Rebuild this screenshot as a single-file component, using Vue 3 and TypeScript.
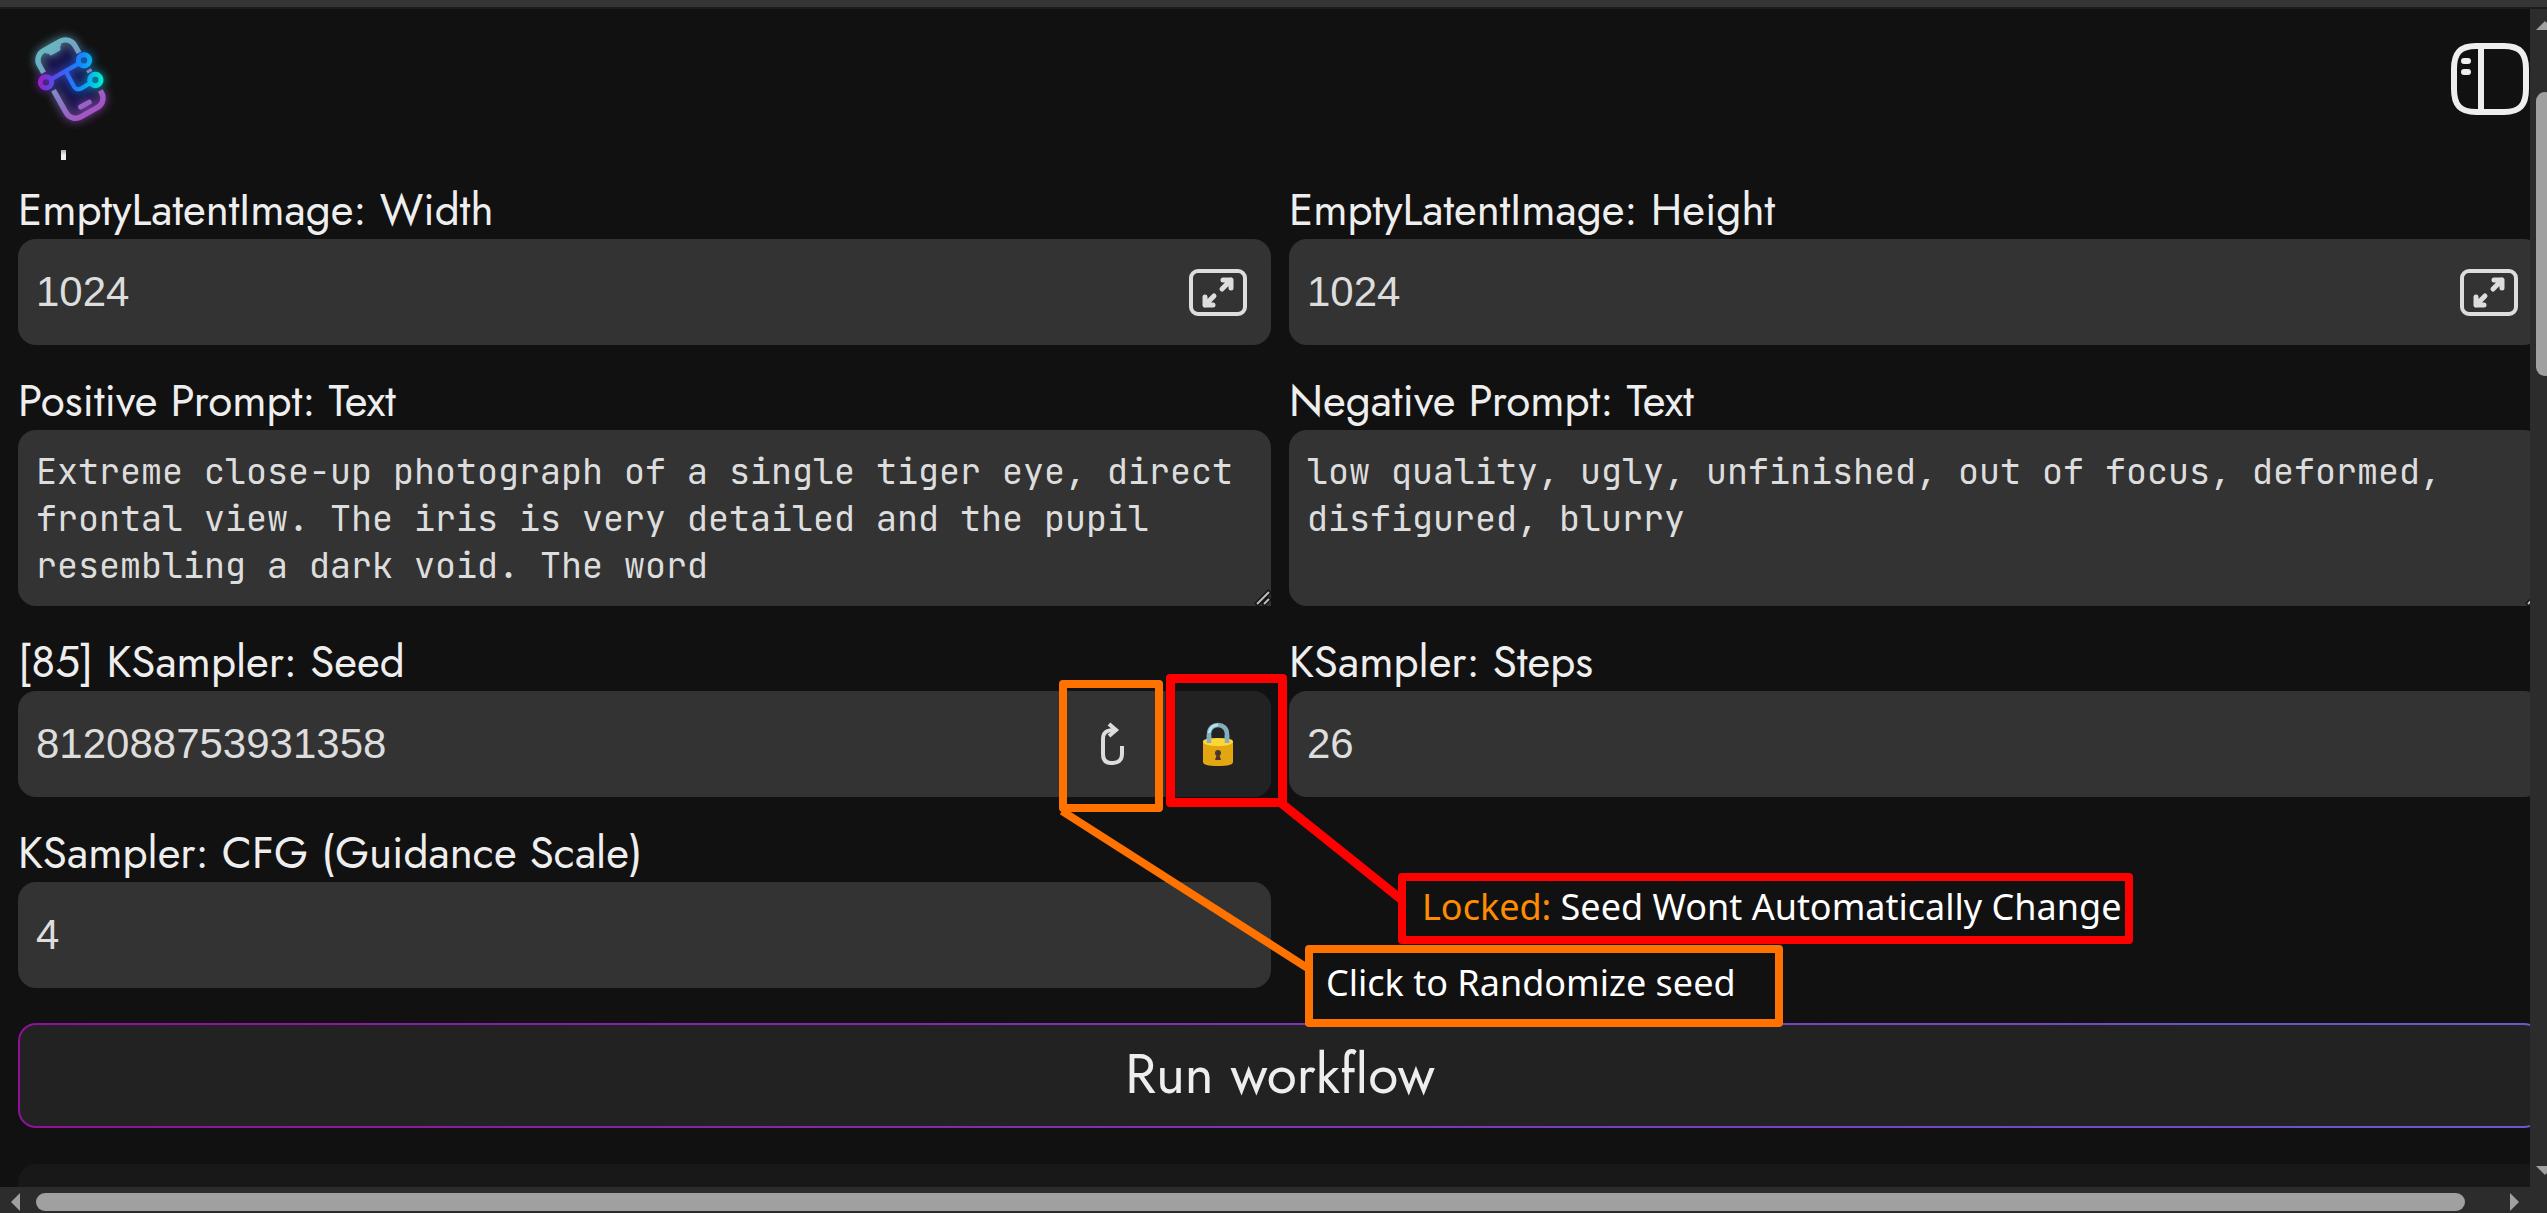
<script setup lang="ts">
import { ref } from 'vue'

interface Field {
  id: string
  label: string
  kind: 'number' | 'text' | 'seed' | 'plain'
  value: string
}

const fields = ref<Field[]>([
  { id: 'width', label: 'EmptyLatentImage: Width', kind: 'number', value: '1024' },
  { id: 'height', label: 'EmptyLatentImage: Height', kind: 'number', value: '1024' },
  {
    id: 'positive',
    label: 'Positive Prompt: Text',
    kind: 'text',
    value:
      'Extreme close-up photograph of a single tiger eye, direct frontal view. The iris is very detailed and the pupil resembling a dark void. The word',
  },
  {
    id: 'negative',
    label: 'Negative Prompt: Text',
    kind: 'text',
    value: 'low quality, ugly, unfinished, out of focus, deformed, disfigured, blurry',
  },
  { id: 'seed', label: '[85] KSampler: Seed', kind: 'seed', value: '812088753931358' },
  { id: 'steps', label: 'KSampler: Steps', kind: 'plain', value: '26' },
  { id: 'cfg', label: 'KSampler: CFG (Guidance Scale)', kind: 'plain', value: '4' },
])

const locked = ref(true)

function randomize(field: Field) {
  field.value = String(Math.floor(Math.random() * 1e15))
}
</script>

<template>
  <div class="page">
    <div class="topbar"></div>
    <div class="body">
      <div class="view">
        <header class="header">
          <svg class="logo" viewBox="24 21 315 315" aria-hidden="true">
            <defs>
              <linearGradient id="phone" gradientUnits="userSpaceOnUse" x1="-20" y1="-115" x2="20" y2="115">
                <stop offset="0" stop-color="#69b6c2" />
                <stop offset="0.5" stop-color="#7f88c6" />
                <stop offset="1" stop-color="#a552c6" />
              </linearGradient>
              <linearGradient id="nodes" gradientUnits="userSpaceOnUse" x1="90" y1="165" x2="275" y2="190">
                <stop offset="0" stop-color="#9a1fc8" />
                <stop offset="0.25" stop-color="#4f50ec" />
                <stop offset="0.62" stop-color="#1585ff" />
                <stop offset="0.8" stop-color="#08b4f4" />
                <stop offset="1" stop-color="#00ecd4" />
              </linearGradient>
              <filter id="glow" filterUnits="userSpaceOnUse" x="-400" y="-400" width="1000" height="1000">
                <feGaussianBlur stdDeviation="14" />
              </filter>
              <g id="phone-shape" transform="translate(182 178) rotate(-29.5)" fill="none" stroke="url(#phone)" stroke-width="16">
                <path d="M-61-57V-83A32 32 0 0 1-29-115H29A32 32 0 0 1 61-83V-57" />
                <path d="M-61 3V81A32 32 0 0 0-29 113H29A32 32 0 0 0 61 81V73" />
                <path d="M61 1V10" />
                <path d="M-26-110H26V-103Q19-102 19-97Q19-91 13-91H-13Q-19-91-19-97Q-19-102-26-103Z" fill="url(#phone)" stroke="none" />
                <path d="M-15 87H15" stroke-width="15" stroke-linecap="round" />
              </g>
              <g id="node-shape" fill="none" stroke="url(#nodes)" stroke-width="15">
                <circle cx="108" cy="187" r="17" />
                <circle cx="222" cy="121" r="17" />
                <circle cx="256" cy="180" r="17" />
                <path d="M123 178L207 130M167 154L190 196Q198 213 214 205L241 189" stroke-width="13" />
              </g>
            </defs>
            <rect x="-55" y="-108" width="110" height="216" rx="28" transform="translate(182 178) rotate(-29.5)" fill="#1c1464" opacity="0.7" filter="url(#glow)" />
            <use href="#phone-shape" filter="url(#glow)" opacity="0.9" />
            <use href="#node-shape" filter="url(#glow)" opacity="0.9" />
            <use href="#phone-shape" />
            <use href="#node-shape" />
          </svg>
          <button class="icon-button" type="button" aria-label="Toggle sidebar">
            <svg width="80" height="73" viewBox="0 0 80 73" fill="none" stroke="#eee" stroke-width="6">
              <path d="M26 3H54C70 3 76 10 76 26V46C76 62 70 69 54 69H26C10 69 4 62 4 46V26C4 10 10 3 26 3Z" />
              <path d="M31 3V69" />
              <path d="M14 18H18M14 29H18" stroke-linecap="round" />
            </svg>
          </button>
        </header>

        <main class="content">
          <span class="title-tail"></span>
          <form class="grid" @submit.prevent>
            <div v-for="field in fields" :key="field.id" class="field">
              <label :for="field.id">{{ field.label }}</label>
              <div v-if="field.kind === 'text'" class="area">
                <textarea :id="field.id" v-model="field.value" spellcheck="false"></textarea>
                <svg class="grip" width="18" height="18" viewBox="0 0 18 18" aria-hidden="true">
                  <path d="M0 0H18V18H0Z" fill="#333" />
                  <path d="M3 17L17 3M10 17L17 10" stroke="#151515" stroke-width="5" />
                  <path d="M4 16L16 4M11 16L16 11" stroke="#bbb" stroke-width="2" />
                </svg>
              </div>
              <div v-else class="control">
                <input :id="field.id" v-model="field.value" type="text" inputmode="numeric" />
                <button v-if="field.kind === 'number'" class="expand" type="button" aria-label="Expand">
                  <svg width="58" height="47" viewBox="0 0 58 47" fill="none" stroke="#ddd" stroke-width="4" stroke-linecap="round" stroke-linejoin="round">
                    <rect x="2" y="2" width="54" height="43" rx="7" />
                    <path d="M33 20L42 11M34 11H42V19M25 27L16 36M16 28V36H24" stroke-width="5" />
                  </svg>
                </button>
                <template v-if="field.kind === 'seed'">
                  <button class="random" type="button" aria-label="Randomize seed" @click="randomize(field)">
                    <svg width="28" height="44" viewBox="0 0 28 44" fill="none" stroke="#ddd" stroke-width="4">
                      <path d="M24 24V32C24 38 20 41 15 41H13C8 41 5 38 5 32V17C5 10 9 8 16 8" />
                      <path d="M11 2L18 8L11 14" />
                    </svg>
                  </button>
                  <button class="lock" type="button" :aria-pressed="locked" aria-label="Lock seed" @click="locked = !locked">
                    <svg width="32" height="46" viewBox="0 0 32 46">
                      <path d="M7 24V13C7 1 25 1 25 13V24" fill="none" stroke="#84aec0" stroke-width="4.5" />
                      <path d="M7 12C8 6 12 4 16 4" fill="none" stroke="#b5e3ec" stroke-width="2.5" />
                      <path d="M1 20V41Q1 45 16 45Q31 45 31 41V20Z" fill="#e2a610" />
                      <path d="M1 20Q2 17 16 17Q30 17 31 20Q31 25 16 25Q1 25 1 20Z" fill="#fdd835" />
                      <path d="M7 14V22M25 14V22" stroke="#84aec0" stroke-width="4.5" />
                      <circle cx="16" cy="32" r="3" fill="#4e342e" />
                      <path d="M15 33H17L19 39H13Z" fill="#4e342e" />
                    </svg>
                  </button>
                </template>
              </div>
            </div>
          </form>
          <button class="run" type="button">Run workflow</button>
          <section class="panel"></section>
        </main>

        <div class="notes">
          <svg class="leaders" width="400" height="200" viewBox="1050 800 400 200" aria-hidden="true">
            <path d="M1062 811L1309 969" stroke="#ff7200" stroke-width="8" />
            <path d="M1281 803L1402 900" stroke="#f00" stroke-width="9" />
          </svg>
          <span class="mark mark-random"></span>
          <span class="mark mark-lock"></span>
          <p class="note note-lock"><b>Locked:</b> Seed Wont Automatically Change</p>
          <p class="note note-random">Click to Randomize seed</p>
        </div>
      </div>

      <div class="vbar" aria-hidden="true">
        <i class="arrow up"></i>
        <i class="thumb"></i>
        <i class="arrow down"></i>
      </div>
    </div>
    <div class="hbar" aria-hidden="true">
      <i class="arrow left"></i>
      <i class="thumb"></i>
      <i class="arrow right"></i>
    </div>
  </div>
</template>

<style>
body {
  margin: 0;
  background: #111;
}
</style>

<style scoped>
* {
  box-sizing: border-box;
}
button {
  padding: 0;
  border: 0;
  background: none;
  color: inherit;
}
svg {
  display: block;
}
.page {
  position: relative;
  display: flex;
  flex-direction: column;
  height: 100vh;
  overflow: hidden;
  background: #111;
  color: #eee;
  font-family: Jost, Futura, Lato, sans-serif;
}
.topbar {
  flex: none;
  height: 9px;
  background: #353535;
  border-bottom: 2px solid #1c1c1c;
}
.body {
  display: flex;
  flex: 1;
  min-height: 0;
}
.view {
  flex: 1;
  min-width: 0;
  overflow: hidden;
}
.header {
  display: flex;
  justify-content: space-between;
  align-items: flex-start;
  height: 141px;
  padding: 18px 0 0 18px;
}
.logo {
  width: 105px;
  height: 105px;
}
.icon-button {
  margin-top: 16px;
}
.content {
  width: calc(100% + 30px);
  padding: 0 18px;
}
.title-tail {
  display: block;
  width: 5px;
  height: 10px;
  margin: 0 0 21px 43px;
  background: linear-gradient(#aaa, #eee 5px);
}
.grid {
  display: grid;
  grid-template-columns: 1fr 1fr;
  gap: 27px 18px;
}
.field {
  display: flex;
  flex-direction: column;
  min-width: 0;
}
label {
  height: 58px;
  font-size: 44px;
  line-height: 58px;
  white-space: nowrap;
}
.control {
  display: flex;
  align-items: center;
  height: 106px;
  border-radius: 18px;
  background: #333;
  overflow: hidden;
}
input {
  flex: 1;
  min-width: 0;
  height: 100%;
  padding: 0 18px;
  border: 0;
  outline: 0;
  background: none;
  color: #ddd;
  font: 42px "Liberation Sans", Arial, sans-serif;
}
.area {
  position: relative;
}
textarea {
  display: block;
  width: 100%;
  height: 176px;
  padding: 18px;
  border: 0;
  outline: 0;
  border-radius: 18px;
  background: #333;
  color: #ddd;
  font: 35px/47px "JetBrains Mono", "DejaVu Sans Mono", monospace;
  resize: none;
  overflow: hidden;
}
.grip {
  position: absolute;
  right: 0;
  bottom: 0;
}
.expand {
  margin-right: 24px;
}
.random,
.lock {
  display: flex;
  align-items: center;
  justify-content: center;
  width: 106px;
  height: 106px;
}
.lock {
  background: #222;
}
.run {
  display: block;
  width: 100%;
  height: 105px;
  margin: 35px 0 36px;
  padding-bottom: 4px;
  border: 2px solid transparent;
  border-radius: 18px;
  background:
    linear-gradient(#222, #222) padding-box,
    linear-gradient(to right, #90109a, #6a5acd) border-box;
  font: 55px Jost, Futura, Lato, sans-serif;
}
.panel {
  height: 200px;
  border-radius: 18px;
  background: #181818;
}
.notes {
  position: absolute;
  inset: 0;
  pointer-events: none;
}
.leaders,
.mark,
.note {
  position: absolute;
}
.leaders {
  left: 1050px;
  top: 800px;
}
.mark {
  border: 8px solid #ff7200;
  border-radius: 4px;
}
.mark-random {
  left: 1059px;
  top: 680px;
  width: 104px;
  height: 132px;
}
.mark-lock {
  left: 1166px;
  top: 674px;
  width: 121px;
  height: 133px;
  border: 9px solid #f00;
}
.note {
  margin: 0;
  border: 8px solid #ff7200;
  border-radius: 4px;
  color: #fff;
  font: 36px/52px "Noto Sans", sans-serif;
  white-space: nowrap;
}
.note b {
  color: #ff8c00;
  font-weight: 400;
}
.note-lock {
  left: 1398px;
  top: 873px;
  width: 735px;
  height: 71px;
  padding-left: 16px;
  border-color: #f00;
}
.note-random {
  left: 1305px;
  top: 945px;
  width: 478px;
  height: 82px;
  padding: 4px 0 0 13px;
}
.vbar {
  display: flex;
  flex-direction: column;
  width: 17px;
  padding: 12px 0 12px 6px;
  background: #2c2c2c;
  overflow: hidden;
}
.hbar {
  display: flex;
  flex: none;
  align-items: center;
  height: 26px;
  padding: 4px 28px 0 11px;
  background: #2c2c2c;
}
.arrow {
  flex: none;
  background: #a0a0a0;
}
.vbar .arrow {
  width: 18px;
  height: 9px;
}
.hbar .arrow {
  width: 9px;
  height: 18px;
}
.up {
  clip-path: polygon(0 100%, 50% 0, 100% 100%);
}
.down {
  margin-top: auto;
  clip-path: polygon(0 0, 50% 100%, 100% 0);
}
.left {
  clip-path: polygon(100% 0, 0 50%, 100% 100%);
}
.right {
  clip-path: polygon(0 0, 100% 50%, 0 100%);
}
.thumb {
  border-radius: 9px;
  background: #a0a0a0;
}
.vbar .thumb {
  width: 18px;
  height: 284px;
  margin-top: 62px;
}
.hbar .thumb {
  flex: 1;
  height: 18px;
  margin: 0 45px 0 16px;
}
</style>
